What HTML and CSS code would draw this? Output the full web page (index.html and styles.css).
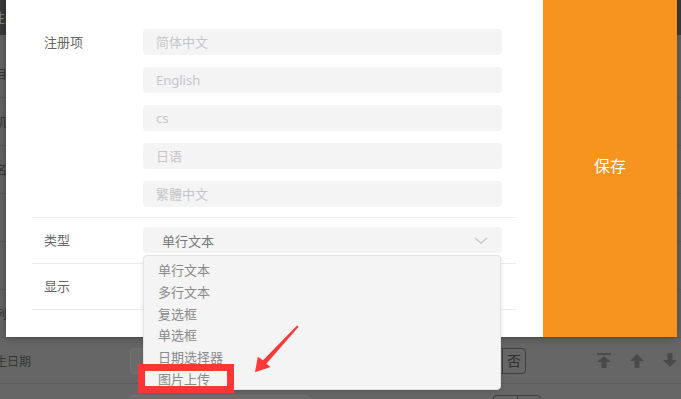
FILE: index.html
```html
<!DOCTYPE html>
<html lang="zh">
<head>
    <meta charset="UTF-8">
    <meta name="viewport" content="width=device-width, initial-scale=1.0">
    <title>注册项设置</title>
    <link rel="stylesheet" href="styles.css">
</head>
<body>
    <div class="page">
        <div class="page-head">注册信息设置</div>
        <div class="page-list">
            <div class="page-row"><span class="page-label">项目名称</span></div>
            <div class="page-row"><span class="page-label">手机号码</span></div>
            <div class="page-row"><span class="page-label">姓名</span></div>
            <div class="page-row"><span class="page-label"></span></div>
            <div class="page-row"><span class="page-label"></span></div>
            <div class="page-row"><span class="page-label">排列</span></div>
            <div class="page-row row-short">
                <span class="page-label">出生日期</span>
                <div class="page-input"></div>
                <div class="page-opts"><span>是</span><span>否</span></div>
                <div class="page-tools">
                    <svg width="14" height="15" viewBox="0 0 14 15"><rect x="0" y="0" width="14" height="2"/><polygon points="7,3 14,9 9.5,9 9.5,15 4.5,15 4.5,9 0,9"/></svg>
                    <svg width="14" height="15" viewBox="0 0 14 15"><polygon points="7,1 14,8 9.5,8 9.5,15 4.5,15 4.5,8 0,8"/></svg>
                    <svg width="14" height="15" viewBox="0 0 14 15"><polygon points="7,14 14,7 9.5,7 9.5,0 4.5,0 4.5,7 0,7"/></svg>
                </div>
            </div>
            <div class="page-row">
                <span class="page-label">性别</span>
                <div class="page-input short"></div>
                <div class="page-opts"><span>是</span><span>否</span></div>
            </div>
        </div>
    </div>

    <div class="modal">
        <div class="modal-form">
            <div class="form-row">
                <label class="form-label">注册项</label>
                <div class="form-field field-stack">
                    <input class="text-input" placeholder="简体中文">
                    <input class="text-input" placeholder="English">
                    <input class="text-input" placeholder="cs">
                    <input class="text-input" placeholder="日语">
                    <input class="text-input" placeholder="繁體中文">
                </div>
            </div>
            <div class="form-row">
                <label class="form-label">类型</label>
                <div class="form-field select-wrap">
                    <div class="select-box">
                        <span>单行文本</span>
                        <svg width="14" height="7" viewBox="0 0 14 7"><polyline points="1,1 7,6 13,1" fill="none" stroke="#c9c9c9" stroke-width="1.5"/></svg>
                    </div>
                    <ul class="select-menu">
                        <li>单行文本</li>
                        <li>多行文本</li>
                        <li>复选框</li>
                        <li>单选框</li>
                        <li>日期选择器</li>
                        <li>图片上传</li>
                    </ul>
                </div>
            </div>
            <div class="form-row">
                <label class="form-label">显示</label>
                <div class="form-field"></div>
            </div>
        </div>
        <button class="save-btn">保存</button>
    </div>

    <!-- annotation marks -->
    <div class="mark-box"></div>
    <svg class="mark-arrow" width="52" height="55" viewBox="250 322 52 55">
        <polygon points="255,372.3 257.8,356.8 263,360.2 297,325.4 298.6,326.8 266.4,363.8 270.6,366.9" fill="#fc3a3a"/>
    </svg>
</body>
</html>
```

FILE: styles.css
```css
body,ul,li{
    padding: 0;
    margin: 0;
    list-style: none;
}
body{
    width: 681px;
    height: 399px;
    overflow: hidden;
    position: relative;
    background: #666;
    font-family: "Noto Sans", "Noto Sans CJK SC", sans-serif;
    font-size: 13px;
}

/* page under the mask */
.page{
    height: 399px;
    overflow: hidden;
}
.page-head{
    height: 35px;
    line-height: 35px;
    background: #3c3c3c;
    color: #858585;
    margin-left: -8px;
}
.page-list{
    padding-top: 15px;
}
.page-row{
    height: 48px;
    box-sizing: border-box;
    border-bottom: 1px solid #5c5c5c;
    display: flex;
    align-items: center;
    color: #363636;
}
.page-row.row-short{
    height: 46px;
}
.page-label{
    width: 134px;
    margin-left: -4px;
    text-indent: -13px;
    flex: none;
    font-size: 12px;
    white-space: nowrap;
}
.page-input{
    width: 360px;
    height: 26px;
    background: #6b6b6b;
    border: 1px solid #707070;
    border-radius: 4px;
    box-sizing: border-box;
}
.page-input.short{
    width: 180px;
}
.page-opts{
    display: flex;
    margin-left: -12px;
}
.page-input.short + .page-opts{
    margin-left: 183px;
}
.page-opts span{
    width: 24px;
    height: 26px;
    line-height: 24px;
    text-align: center;
    border: 1px solid #404040;
    box-sizing: border-box;
    font-size: 14px;
    color: #2f2f2f;
}
.page-opts span:first-child{
    border-radius: 4px 0 0 4px;
    border-right: none;
}
.page-opts span:last-child{
    border-radius: 0 4px 4px 0;
}
.page-tools{
    display: flex;
    gap: 19px;
    margin-left: 71px;
    fill: #4a4a4a;
}

/* modal */
.modal{
    position: absolute;
    left: 6px;
    top: -7px;
    width: 671px;
    height: 344px;
    display: flex;
    background: #fff;
    box-shadow: 0 0 10px rgba(0,0,0,.35);
}
.modal-form{
    flex: 1;
    padding: 27px 27px 0 26px;
}
.form-row{
    display: flex;
    align-items: flex-start;
    padding: 9px 0 10px;
    border-bottom: 1px solid #ececec;
}
.form-label{
    width: 111px;
    flex: none;
    box-sizing: border-box;
    padding-left: 12px;
    line-height: 26px;
    color: #666;
}
.form-field{
    width: 359px;
    min-height: 26px;
}
.field-stack{
    display: flex;
    flex-direction: column;
    gap: 12px;
}
.text-input{
    display: block;
    height: 26px;
    border: none;
    outline: none;
    background: #f4f4f4;
    border-radius: 4px;
    padding: 0 13px;
    font-family: inherit;
    font-size: 13px;
    color: #666;
}
.text-input::placeholder{
    color: #c6c6c6;
}
.select-wrap{
    position: relative;
}
.select-box{
    height: 26px;
    background: #f4f4f4;
    border-radius: 4px;
    padding: 0 14px 0 19px;
    display: flex;
    align-items: center;
    justify-content: space-between;
    color: #777;
}
.select-menu{
    position: absolute;
    left: 0;
    top: 28px;
    width: 358px;
    height: 135px;
    box-sizing: border-box;
    overflow: hidden;
    padding-top: 4px;
    background: #f4f4f4;
    border: 1px solid #e2e2e2;
    border-radius: 4px;
    box-shadow: 0 2px 4px rgba(0,0,0,.12);
    z-index: 2;
}
.select-menu li{
    padding-left: 14px;
    line-height: 21.8px;
    color: #8a8a8a;
}
.save-btn{
    width: 134px;
    flex: none;
    border: none;
    background: #f7931f;
    color: #fff;
    font-family: inherit;
    font-size: 16px;
    cursor: pointer;
}

/* red marks */
.mark-box{
    position: absolute;
    left: 138px;
    top: 364px;
    width: 96px;
    height: 29px;
    box-sizing: border-box;
    border: 7px solid #fc3535;
    z-index: 3;
}
.mark-arrow{
    position: absolute;
    left: 250px;
    top: 322px;
    z-index: 3;
}
```
